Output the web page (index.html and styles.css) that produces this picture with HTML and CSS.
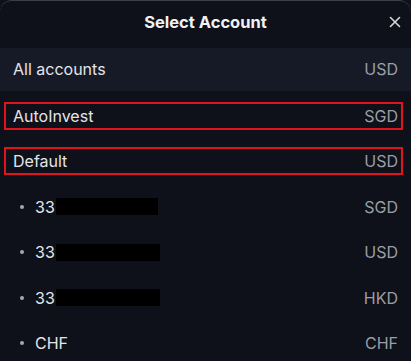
FILE: index.html
```html
<!DOCTYPE html>
<html>
<head>
<meta charset="utf-8">
<link rel="stylesheet" href="styles.css">
</head>
<body>
<div class="sheet">
  <header class="head">
    <h1 class="title">Select Account</h1>
    <button class="close" aria-label="Close">
      <svg width="12" height="12" viewBox="0 0 12 12"><path d="M1.5 1.5L10.5 10.5M10.5 1.5L1.5 10.5" stroke="#d6d7da" stroke-width="1.6" stroke-linecap="round"/></svg>
    </button>
  </header>
  <ul class="list">
    <li class="row all"><span class="name">All accounts</span><span class="cur">USD</span></li>
    <li class="row"><div class="box"><span class="name">AutoInvest</span><span class="cur">SGD</span></div></li>
    <li class="row"><div class="box"><span class="name">Default</span><span class="cur">USD</span></div></li>
    <li class="row sub"><span class="name"><i class="dot"></i>33<span class="redact r1"></span></span><span class="cur">SGD</span></li>
    <li class="row sub"><span class="name"><i class="dot"></i>33<span class="redact r2"></span></span><span class="cur">USD</span></li>
    <li class="row sub"><span class="name"><i class="dot"></i>33<span class="redact r2"></span></span><span class="cur">HKD</span></li>
    <li class="row sub"><span class="name"><i class="dot"></i>CHF</span><span class="cur">CHF</span></li>
  </ul>
</div>
</body>
</html>
```
FILE: styles.css
```css
html, body {
  margin: 0;
  padding: 0;
  background: #0e1119;
  height: 100%;
  overflow: hidden;
}
.sheet {
  font-family: Inter, "Noto Sans", sans-serif;
  background: #0e1119;
  border-top: 1.5px solid #3b3f48;
  border-radius: 12px 12px 0 0;
  height: 100%;
  box-sizing: border-box;
}
.head {
  height: 46.5px;
  display: flex;
  align-items: center;
  justify-content: center;
  position: relative;
}
.title {
  margin: 0 0 5px;
  font-size: 16.5px;
  font-weight: 700;
  color: #f1f2f4;
  letter-spacing: 0;
}
.close {
  position: absolute;
  right: 10px;
  top: 15px;
  background: none;
  border: 0;
  padding: 0;
  width: 12px;
  height: 12px;
  display: flex;
}
.list {
  list-style: none;
  margin: 0;
  padding: 0;
}
.row {
  height: 45.5px;
  display: flex;
  align-items: center;
  justify-content: space-between;
  padding: 0 13px;
  font-size: 16px;
  color: #e4e5e8;
}
.row.all {
  background: #161a26;
  height: 43px;
  margin-bottom: 2.5px;
}
.row:has(.box) {
  padding: 0 8px 0 4px;
}
.box {
  flex: 1;
  height: 28px;
  box-sizing: border-box;
  border: 2px solid #e3131c;
  display: flex;
  align-items: center;
  justify-content: space-between;
  padding: 0 3px 0 7px;
}
.cur {
  color: #9b9ea6;
}
.name {
  display: flex;
  align-items: center;
}
.sub .name {
  padding-left: 7px;
}
.dot {
  width: 4px;
  height: 4px;
  border-radius: 50%;
  background: #a6a8ae;
  margin-right: 11px;
}
.redact {
  display: inline-block;
  background: #000;
  height: 17px;
  margin-left: 1px;
}
.r1 { width: 102px; }
.r2 { width: 104px; }
```
